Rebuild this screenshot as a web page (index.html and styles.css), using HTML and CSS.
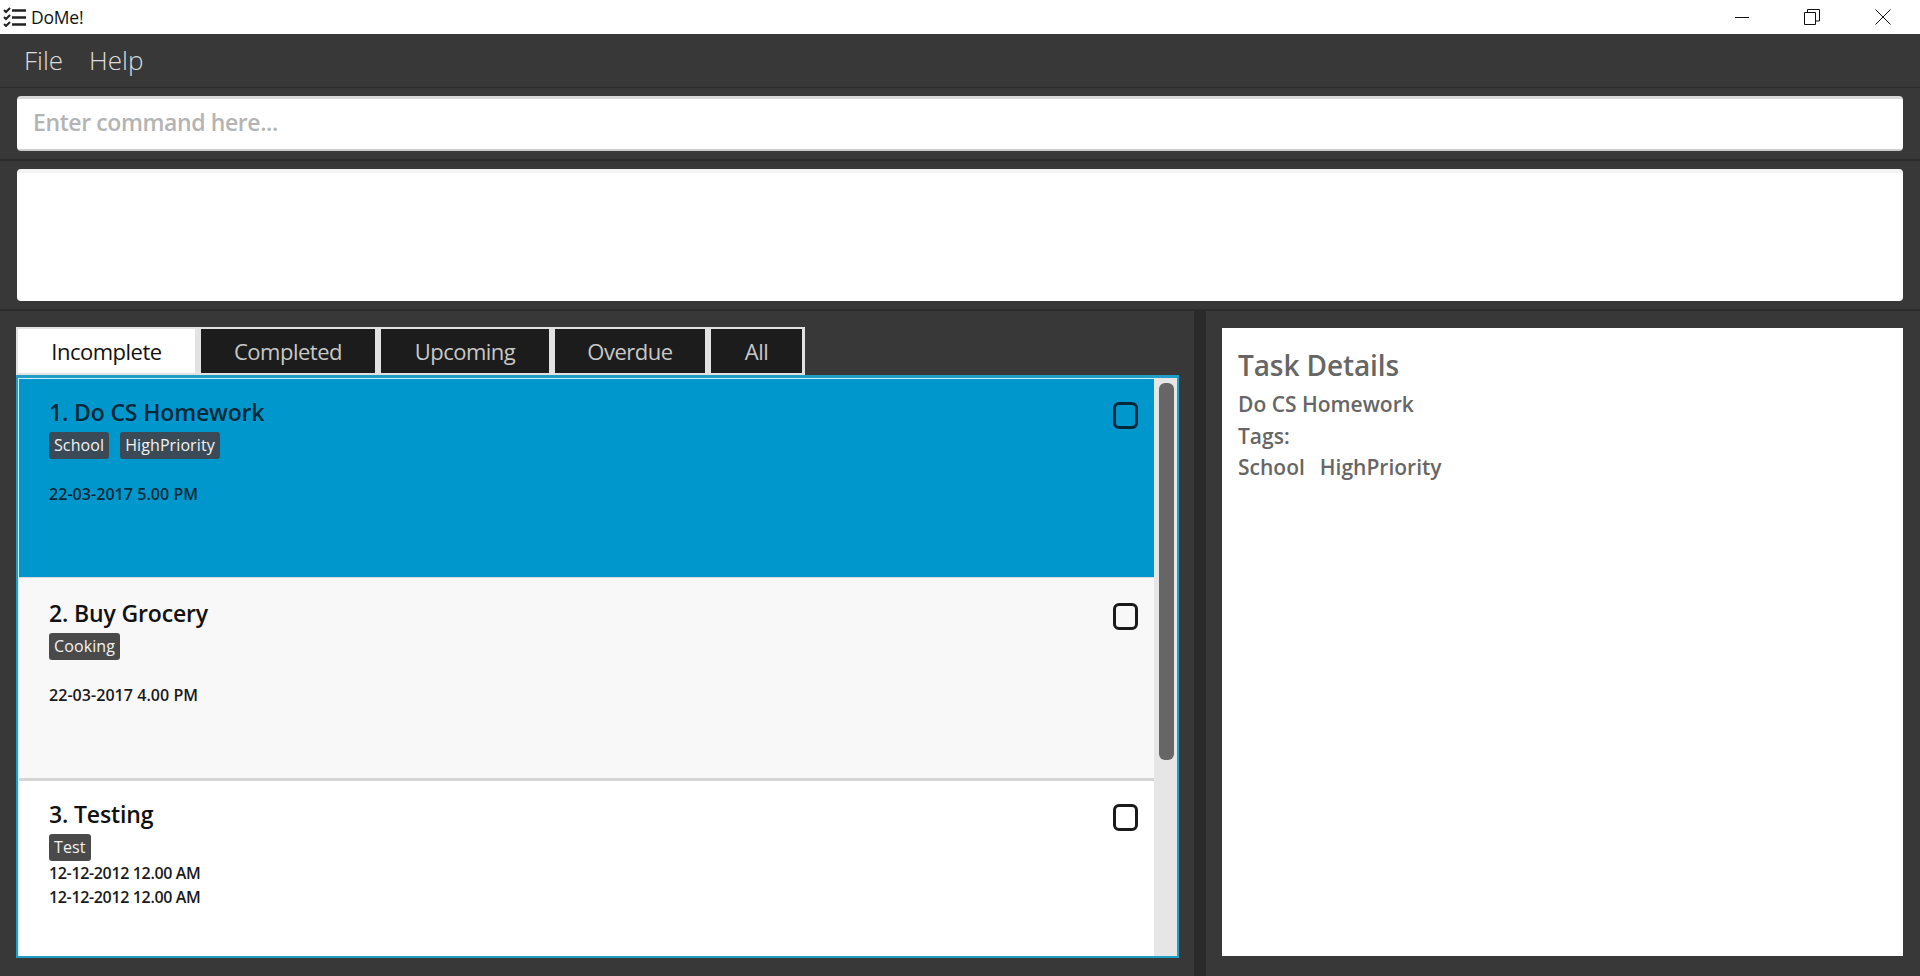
FILE: index.html

```html
<!DOCTYPE html>
<html lang="en">
<head>
  <meta charset="UTF-8">
  <title>DoMe!</title>
  <link rel="stylesheet" href="styles.css">
</head>
<body>
  <div class="titlebar">
    <svg class="app-icon" viewBox="0 0 24 20" width="24" height="20">
      <path d="M1 3l2 2 4-4M1 10l2 2 4-4M1 17l2 2 4-4" fill="none" stroke="#222" stroke-width="2"/>
      <path d="M9 3.500h14M9 10.500h14M9 17.500h14" fill="none" stroke="#222" stroke-width="2.400"/>
    </svg>
    <span class="app-name">DoMe!</span>
    <div class="win-controls">
      <svg viewBox="0 0 16 16" width="16" height="16"><path d="M2 8.500h14" stroke="#111" fill="none"/></svg>
      <svg viewBox="0 0 16 16" width="16" height="16"><path d="M.5 3.500h11v12H.5zM3.500 3.500V.5h12v11.500h-4" stroke="#111" fill="none"/></svg>
      <svg viewBox="0 0 16 16" width="16" height="16"><path d="M.5.5l15 15M15.500.5l-15 15" stroke="#111" fill="none"/></svg>
    </div>
  </div>

  <div class="menubar">
    <span>File</span>
    <span>Help</span>
  </div>

  <div class="band command-band">
    <div class="command-box">Enter command here...</div>
  </div>

  <div class="band result-band">
    <div class="result-box"></div>
  </div>

  <div class="main">
    <div class="left">
      <div class="tabs">
        <div class="tab tab-active t1">Incomplete</div>
        <div class="tab t2">Completed</div>
        <div class="tab t3">Upcoming</div>
        <div class="tab t4">Overdue</div>
        <div class="tab t5">All</div>
      </div>
      <div class="list">
        <div class="rows">
          <div class="row row-selected">
            <div class="row-text">
              <div class="task-name">1. Do CS Homework</div>
              <div class="tags"><span class="tag">School</span><span class="tag">HighPriority</span></div>
              <div class="task-date date-gap">22-03-2017 5.00 PM</div>
            </div>
            <div class="checkbox"></div>
          </div>
          <div class="row row-even">
            <div class="row-text">
              <div class="task-name">2. Buy Grocery</div>
              <div class="tags"><span class="tag">Cooking</span></div>
              <div class="task-date date-gap">22-03-2017 4.00 PM</div>
            </div>
            <div class="checkbox"></div>
          </div>
          <div class="row">
            <div class="row-text">
              <div class="task-name">3. Testing</div>
              <div class="tags"><span class="tag">Test</span></div>
              <div class="task-date">12-12-2012 12.00 AM</div>
              <div class="task-date">12-12-2012 12.00 AM</div>
            </div>
            <div class="checkbox"></div>
          </div>
        </div>
        <div class="scrollbar"><div class="thumb"></div></div>
      </div>
    </div>

    <div class="splitter"></div>

    <div class="right">
      <div class="details">
        <h2>Task Details</h2>
        <p>Do CS Homework</p>
        <p>Tags:</p>
        <p class="detail-tags"><span>School</span><span>HighPriority</span></p>
      </div>
    </div>
  </div>
</body>
</html>
```

FILE: styles.css

```css
* {
  box-sizing: border-box;
}

html, body {
  margin: 0;
  height: 976px;
  overflow: hidden;
}

body {
  display: flex;
  flex-direction: column;
  background: #383838;
  font-family: "Open Sans", "Noto Sans", sans-serif;
}

.titlebar {
  height: 34px;
  flex: none;
  display: flex;
  align-items: center;
  background: #fff;
  padding-left: 3px;
  color: #111;
}

.app-icon {
  margin-right: 4px;
}

.app-name {
  font-size: 17.500px;
  letter-spacing: -0.2px;
}

.win-controls {
  margin-left: auto;
  display: flex;
  gap: 55px;
  padding-right: 29px;
}

.menubar {
  height: 54px;
  flex: none;
  display: flex;
  align-items: center;
  gap: 26px;
  padding: 0 0 2px 24px;
  color: #ddd;
  font-size: 26px;
  font-weight: 300;
  border-bottom: 1px solid #2b2b2b;
}

.band {
  flex: none;
  padding: 8px 17px;
  border-bottom: 2px solid #2b2b2b;
}

.command-band {
  height: 73px;
}

.result-band {
  height: 150px;
}

.command-box {
  height: 55px;
  background: #fff;
  border-top: 3px solid #d8d8d8;
  border-bottom: 2px solid #ccc;
  border-radius: 4px;
  padding-left: 16px;
  line-height: 47px;
  font-size: 23px;
  font-weight: 600;
  color: #b4b4b4;
  letter-spacing: -0.4px;
}

.result-box {
  height: 132px;
  background: #fff;
  border-top: 4px solid #f4f4f4;
  border-radius: 4px;
}

.main {
  flex: 1;
  min-height: 0;
  display: flex;
}

.left {
  width: 1194px;
  flex: none;
  padding: 16px 15px 0 16px;
}

.tabs {
  display: inline-flex;
  gap: 6px;
  height: 48px;
  padding: 2px 3px 2px 2px;
  background: #e2e2e2;
  vertical-align: top;
}

.tab {
  display: flex;
  align-items: center;
  justify-content: center;
  background: #1c1c1c;
  color: #c8c8c8;
  font-size: 22px;
  letter-spacing: -0.5px;
}

.tab-active {
  background: #fff;
  color: #111;
}

.t1 { width: 177px; }
.t2 { width: 174px; }
.t3 { width: 168px; }
.t4 { width: 150px; }
.t5 { width: 91px; }

.list {
  height: 583px;
  display: flex;
  overflow: hidden;
  border: 2px solid #1f9fc8;
  border-top-width: 3px;
  background: #fff;
}

.rows {
  flex: 1;
  min-width: 0;
  border-left: 1px solid #cdeefa;
  border-top: 1px solid #cdeefa;
}

.row {
  height: 198px;
  display: flex;
  align-items: flex-start;
  justify-content: space-between;
  padding: 17px 16px 0 30px;
  background: #fff;
}

.row-selected {
  background: #0098cc;
}

.row-even {
  height: 204px;
  padding-top: 19px;
  background: #f8f8f8;
  border-top: 1px solid #d8d8d8;
  border-bottom: 3px solid #d5d5d5;
}

.task-name {
  font-size: 23px;
  font-weight: 600;
  line-height: 32px;
  color: #111;
  letter-spacing: -0.15px;
}

.row-selected .task-name,
.row-selected .task-date {
  color: #02283a;
}

.tags {
  display: flex;
  gap: 11px;
  margin-top: 4px;
}

.tag {
  height: 27px;
  line-height: 26px;
  padding: 0 5px;
  border-radius: 3px;
  background: #4a4a4a;
  color: #f2f2f2;
  font-size: 16px;
  letter-spacing: 0.1px;
}

.row-selected .tag {
  background: #3a4b57;
}

.task-date {
  font-size: 16px;
  font-weight: 600;
  line-height: 24px;
  color: #1a1a1a;
  letter-spacing: -0.35px;
}

.date-gap {
  margin-top: 23px;
  letter-spacing: 0.05px;
}

.checkbox {
  width: 25px;
  height: 27px;
  margin-top: 6px;
  border: 3px solid #1a1a1a;
  border-radius: 6px;
}

.row-selected .checkbox {
  border-color: #02283a;
}

.scrollbar {
  width: 23px;
  flex: none;
  background: #e6e6e6;
  padding: 5px 3px 0 5px;
}

.thumb {
  height: 377px;
  background: #666;
  border-radius: 6px;
}

.splitter {
  width: 12px;
  flex: none;
  background: #2a2a2a;
}

.right {
  flex: 1;
  padding: 17px 17px 20px 16px;
}

.details {
  height: 100%;
  background: #fff;
  padding: 18px 16px;
  color: #666;
}

.details h2 {
  margin: 0 0 5px;
  font-size: 28px;
  font-weight: 600;
  line-height: 38px;
  letter-spacing: -0.1px;
}

.details p {
  margin: 0;
  font-size: 21px;
  font-weight: 600;
  line-height: 31.500px;
}

.detail-tags {
  display: flex;
  gap: 15px;
}
```
